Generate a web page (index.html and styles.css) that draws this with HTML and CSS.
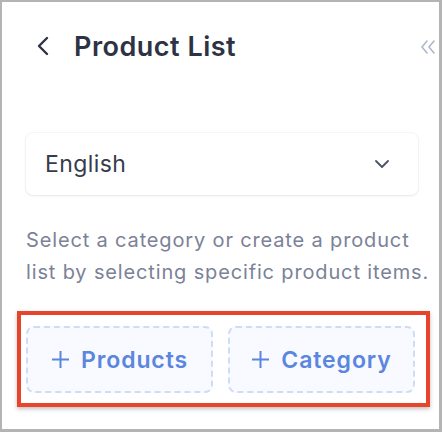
FILE: index.html
```html
<!DOCTYPE html>
<html>
<head>
<meta charset="utf-8">
<link rel="stylesheet" href="styles.css">
</head>
<body>
<div class="frame">
  <div class="header">
    <div class="title-group">
      <svg class="back" width="14" height="20" viewBox="0 0 14 20"><polyline points="11,2 3,10 11,18" fill="none" stroke="#2d3343" stroke-width="2.4" stroke-linecap="round" stroke-linejoin="round"/></svg>
      <h1 class="title">Product List</h1>
    </div>
    <svg class="collapse" width="16" height="14" viewBox="0 0 16 14"><polyline points="7,1 2,7 7,13" fill="none" stroke="#b0b7cb" stroke-width="1.6" stroke-linecap="round" stroke-linejoin="round"/><polyline points="14,1 9,7 14,13" fill="none" stroke="#b0b7cb" stroke-width="1.6" stroke-linecap="round" stroke-linejoin="round"/></svg>
  </div>
  <div class="select">
    <span class="select-value">English</span>
    <svg class="select-chev" width="14" height="10" viewBox="0 0 14 10"><polyline points="1,2 7,8 13,2" fill="none" stroke="#4b5368" stroke-width="1.8" stroke-linecap="round" stroke-linejoin="round"/></svg>
  </div>
  <p class="desc">Select a category or create a product<br>list by selecting specific product items.</p>
  <div class="highlight">
    <button class="add-btn"><svg class="plus" width="19" height="19" viewBox="0 0 19 19"><path d="M9.5 1v17M1 9.5h17" stroke="#5a86df" stroke-width="2" fill="none"/></svg>Products</button>
    <button class="add-btn"><svg class="plus" width="19" height="19" viewBox="0 0 19 19"><path d="M9.5 1v17M1 9.5h17" stroke="#5a86df" stroke-width="2" fill="none"/></svg>Category</button>
  </div>
</div>
</body>
</html>
```
FILE: styles.css
```css
* { box-sizing: border-box; }
html, body { margin: 0; padding: 0; background: #ffffff; }
body { font-family: Inter, "Noto Sans", sans-serif; }
.frame {
  width: 442px;
  height: 432px;
  border: 2px solid #b4b4b4;
  border-right-width: 3px;
  border-bottom-width: 3px;
  padding: 0 21px 0 24px;
  background: #fff;
}
.header {
  display: flex;
  align-items: center;
  justify-content: space-between;
  height: 48px;
  margin-top: 20px;
  margin-right: -18px;
}
.title-group { display: flex; align-items: center; gap: 24px; padding-left: 10px; }
.back { display: block; }
.title {
  margin: 0;
  font-size: 27px;
  font-weight: 600;
  color: #2d3343;
  letter-spacing: 0.5px;
}
.collapse { display: block; margin-top: 2px; }
.select {
  margin-top: 63px;
  height: 62px;
  border-radius: 7px;
  background: #fff;
  box-shadow: 0 1px 3px rgba(30, 40, 70, 0.08), 0 0 0 1px rgba(30, 40, 70, 0.03);
  display: flex;
  align-items: center;
  justify-content: space-between;
  padding: 0 29px 0 19px;
}
.select-value { font-size: 23px; color: #363c4d; letter-spacing: 0.4px; }
.select-chev { display: block; }
.desc {
  margin: 29px 0 0;
  font-size: 20px;
  line-height: 32px;
  color: #7b8297;
  letter-spacing: 0.85px;
  white-space: nowrap;
}
.highlight {
  margin: 23px -12px 0 -9px;
  border: 4px solid #e8442b;
  box-shadow: 0 2px 4px rgba(0,0,0,0.25);
  padding: 11px 11px 10px 5px;
  display: flex;
  gap: 15px;
}
.add-btn {
  flex: 1;
  height: 67px;
  border: 2px dashed #cfdcf7;
  border-radius: 8px;
  background: #f8faff;
  color: #5a86df;
  font-family: Inter, "Noto Sans", sans-serif;
  font-size: 23px;
  font-weight: 600;
  letter-spacing: 0.9px;
  display: flex;
  align-items: center;
  justify-content: center;
  padding: 0;
}
.plus { display: block; margin-right: 11px; }
```
